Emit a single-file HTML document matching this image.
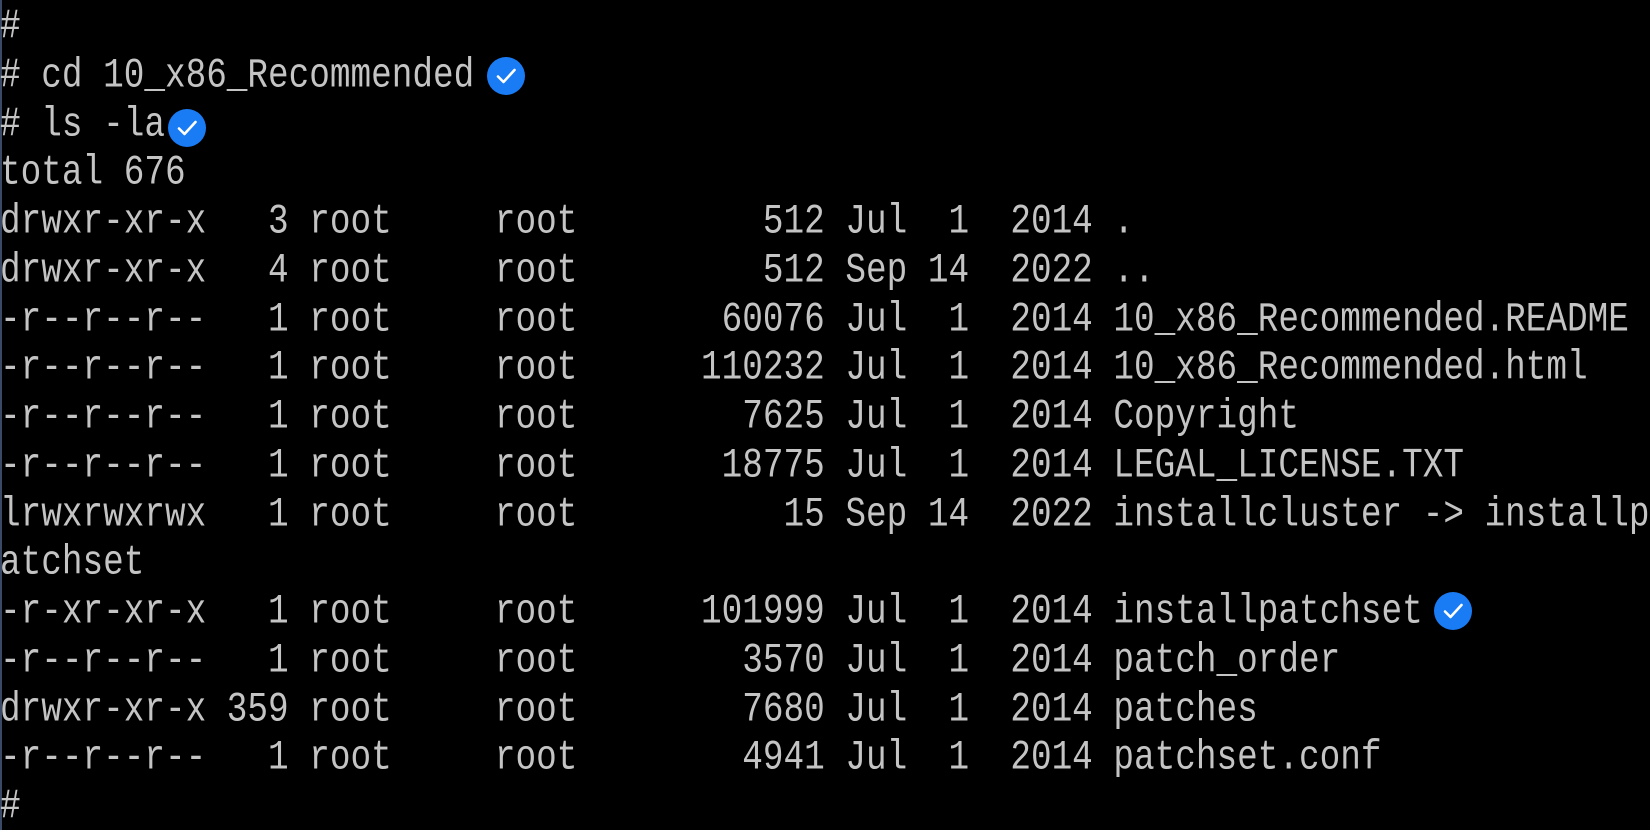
<!DOCTYPE html>
<html><head><meta charset="utf-8"><style>
html,body{margin:0;padding:0;background:#000;width:1650px;height:830px;overflow:hidden}
body{position:relative;border-left:2px solid #3a4a66;box-sizing:border-box}
pre{margin:0;padding-top:5px;position:absolute;left:-2px;top:0;font-family:"Liberation Mono",monospace;font-size:34.375px;line-height:48.75px;color:#c4c4c4;white-space:pre}
pre span{display:inline-block;transform:scaleY(1.2);transform-origin:50% 60%}
.ck{position:absolute;width:38px;height:38px;border-radius:50%;background:#1a7cf5}
.ck svg{position:absolute;left:0;top:0}
</style></head><body>
<pre><span>#</span>
<span># cd 10_x86_Recommended</span>
<span># ls -la</span>
<span>total 676</span>
<span>drwxr-xr-x   3 root     root         512 Jul  1  2014 .</span>
<span>drwxr-xr-x   4 root     root         512 Sep 14  2022 ..</span>
<span>-r--r--r--   1 root     root       60076 Jul  1  2014 10_x86_Recommended.README</span>
<span>-r--r--r--   1 root     root      110232 Jul  1  2014 10_x86_Recommended.html</span>
<span>-r--r--r--   1 root     root        7625 Jul  1  2014 Copyright</span>
<span>-r--r--r--   1 root     root       18775 Jul  1  2014 LEGAL_LICENSE.TXT</span>
<span>lrwxrwxrwx   1 root     root          15 Sep 14  2022 installcluster -&gt; installp</span>
<span>atchset</span>
<span>-r-xr-xr-x   1 root     root      101999 Jul  1  2014 installpatchset</span>
<span>-r--r--r--   1 root     root        3570 Jul  1  2014 patch_order</span>
<span>drwxr-xr-x 359 root     root        7680 Jul  1  2014 patches</span>
<span>-r--r--r--   1 root     root        4941 Jul  1  2014 patchset.conf</span>
<span>#</span></pre>
<div class="ck" style="left:485px;top:57px"><svg width="38" height="38" viewBox="0 0 38 38"><path d="M11 19.5l5.5 5.5L27.5 13" fill="none" stroke="#fff" stroke-width="2.6" stroke-linecap="round" stroke-linejoin="round"/></svg></div>
<div class="ck" style="left:166px;top:109px"><svg width="38" height="38" viewBox="0 0 38 38"><path d="M11 19.5l5.5 5.5L27.5 13" fill="none" stroke="#fff" stroke-width="2.6" stroke-linecap="round" stroke-linejoin="round"/></svg></div>
<div class="ck" style="left:1432px;top:592px"><svg width="38" height="38" viewBox="0 0 38 38"><path d="M11 19.5l5.5 5.5L27.5 13" fill="none" stroke="#fff" stroke-width="2.6" stroke-linecap="round" stroke-linejoin="round"/></svg></div>
</body></html>
